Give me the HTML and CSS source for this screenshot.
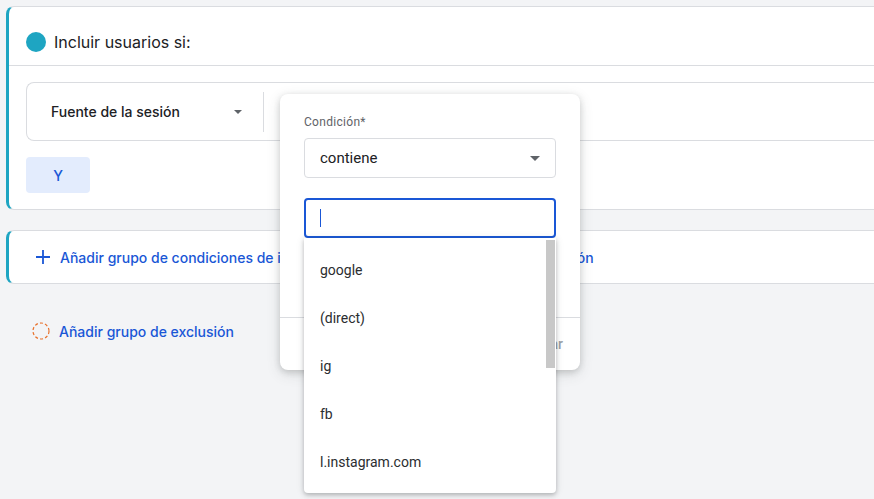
FILE: index.html
```html
<!DOCTYPE html>
<html lang="es">
<head>
<meta charset="utf-8">
<link rel="stylesheet" href="styles.css">
</head>
<body>
<div class="page">
  <section class="card card-include">
    <header class="card-head">
      <span class="dot"></span>
      <span class="head-title">Incluir usuarios si:</span>
    </header>
    <div class="card-body">
      <div class="field-row">
        <div class="dim-select">
          <span class="dim-label">Fuente de la sesión</span>
          <span class="caret"></span>
        </div>
        <span class="vsep"></span>
      </div>
      <button class="btn-and">Y</button>
    </div>
  </section>

  <section class="card card-add">
    <button class="link-btn">
      <svg class="plus" width="14" height="14" viewBox="0 0 14 14"><path d="M7 0v14M0 7h14" stroke="currentColor" stroke-width="1.8" fill="none"/></svg>
      <span>Añadir grupo de condiciones de inclusión</span>
    </button>
    <button class="link-btn">
      <svg class="plus" width="14" height="14" viewBox="0 0 14 14"><path d="M7 0v14M0 7h14" stroke="currentColor" stroke-width="1.8" fill="none"/></svg>
      <span>Añadir secuencia de inclusión</span>
    </button>
  </section>

  <div class="exclude-row">
    <svg class="dashed" width="18" height="18" viewBox="0 0 18 18"><circle cx="9" cy="9" r="8" fill="none" stroke="#e8702a" stroke-width="1.2" stroke-dasharray="3 2.2"/></svg>
    <span>Añadir grupo de exclusión</span>
  </div>
</div>

<div class="popup">
  <div class="popup-body">
    <div class="pop-label">Condición*</div>
    <div class="cond-select">
      <span>contiene</span>
      <span class="caret caret-big"></span>
    </div>
    <div class="text-input"><span class="cursor"></span></div>
  </div>
  <div class="popup-foot">
    <span class="apply">Aplicar</span>
  </div>
</div>

<div class="suggest">
  <div class="opt">google</div>
  <div class="opt">(direct)</div>
  <div class="opt">ig</div>
  <div class="opt">fb</div>
  <div class="opt">l.instagram.com</div>
  <span class="scroll-thumb"></span>
</div>
</body>
</html>
```

FILE: styles.css
```css
* { box-sizing: border-box; }
html, body { margin: 0; padding: 0; }
body {
  width: 874px;
  height: 499px;
  overflow: hidden;
  background: #f3f4f6;
  font-family: "Inter", "Roboto", sans-serif;
  color: #202124;
  position: relative;
}
.page {
  padding: 6px 0 0 6px;
  margin-right: -30px;
}
.card {
  background: #fff;
  border: 1px solid #dadce0;
  border-left: 3px solid #1ea5c2;
  border-radius: 8px 0 0 8px;
}
.card-head {
  height: 59px;
  display: flex;
  align-items: center;
  padding: 12px 0 0 17px;
  gap: 8px;
  border-bottom: 1px solid #dadce0;
}
.dot {
  width: 20px;
  height: 20px;
  border-radius: 50%;
  background: #1ea5c2;
}
.head-title {
  font-size: 16px;
  color: #202124;
}
.card-body {
  padding: 16px 0 16px 17px;
}
.field-row {
  height: 59px;
  border: 1px solid #dadce0;
  border-radius: 8px 0 0 8px;
  border-right: none;
  display: flex;
  align-items: center;
  padding-left: 24px;
}
.dim-select {
  width: 203px;
  display: flex;
  align-items: center;
  justify-content: space-between;
  padding-right: 12px;
}
.dim-label {
  font-size: 14px;
  font-weight: 500;
  color: #202124;
}
.caret {
  width: 0;
  height: 0;
  border-left: 4px solid transparent;
  border-right: 4px solid transparent;
  border-top: 4px solid #5f6368;
}
.caret-big {
  border-left-width: 5px;
  border-right-width: 5px;
  border-top-width: 5px;
}
.vsep {
  width: 1px;
  height: 40px;
  background: #dadce0;
  margin-left: 9px;
}
.btn-and {
  margin-top: 16px;
  width: 64px;
  height: 36px;
  border: none;
  border-radius: 4px;
  background: #e3ecfd;
  color: #1a57d6;
  font-family: inherit;
  font-size: 14px;
  font-weight: 500;
  display: block;
}
.card-add {
  margin-top: 20px;
  height: 54px;
  display: flex;
  align-items: center;
  padding-left: 27px;
  gap: 32px;
}
.link-btn {
  border: none;
  background: none;
  padding: 0;
  display: flex;
  align-items: center;
  gap: 10px;
  color: #1a57d6;
  font-family: inherit;
  font-size: 14px;
  font-weight: 500;
}
.plus { color: #1a57d6; }
.exclude-row {
  margin-top: 38px;
  padding-left: 26px;
  display: flex;
  align-items: center;
  gap: 9px;
  color: #1a57d6;
  font-size: 14px;
  font-weight: 500;
}

.popup {
  position: absolute;
  left: 280px;
  top: 94px;
  width: 300px;
  height: 276px;
  background: #fff;
  border-radius: 8px;
  box-shadow: 0 2px 6px rgba(60,64,67,0.2), 0 4px 14px rgba(60,64,67,0.15);
  font-family: "Roboto", sans-serif;
  display: flex;
  flex-direction: column;
}
.popup-body {
  padding: 20px 24px 0 24px;
  height: 224px;
  border-bottom: 1px solid #dadce0;
}
.pop-label {
  font-size: 12px;
  color: #5f6368;
  letter-spacing: 0.3px;
  line-height: 16px;
}
.cond-select {
  margin-top: 8px;
  height: 40px;
  border: 1px solid #dadce0;
  border-radius: 4px;
  display: flex;
  align-items: center;
  justify-content: space-between;
  padding: 0 15px;
  font-size: 15px;
  color: #202124;
}
.text-input {
  margin-top: 20px;
  height: 40px;
  border: 2px solid #1a57d6;
  border-radius: 4px;
  display: flex;
  align-items: center;
  padding-left: 14px;
}
.cursor {
  width: 1px;
  height: 18px;
  background: #1a57d6;
}
.popup-foot {
  flex: 1;
  display: flex;
  align-items: center;
  justify-content: flex-end;
  padding-right: 17px;
}
.apply {
  font-size: 14px;
  font-weight: 500;
  color: #9aa0a6;
}

.suggest {
  position: absolute;
  left: 304px;
  top: 238px;
  width: 252px;
  height: 255px;
  background: #fff;
  border-radius: 0 0 4px 4px;
  box-shadow: 0 2px 4px rgba(60,64,67,0.3), 0 1px 8px rgba(60,64,67,0.12);
  padding-top: 8px;
  font-family: "Roboto", sans-serif;
  overflow: hidden;
}
.opt {
  height: 48px;
  display: flex;
  align-items: center;
  padding-left: 16px;
  font-size: 14px;
  color: #2b2d30;
}
.scroll-thumb {
  position: absolute;
  right: 1px;
  top: 2px;
  width: 9px;
  height: 128px;
  background: #c8c8c8;
}
```
